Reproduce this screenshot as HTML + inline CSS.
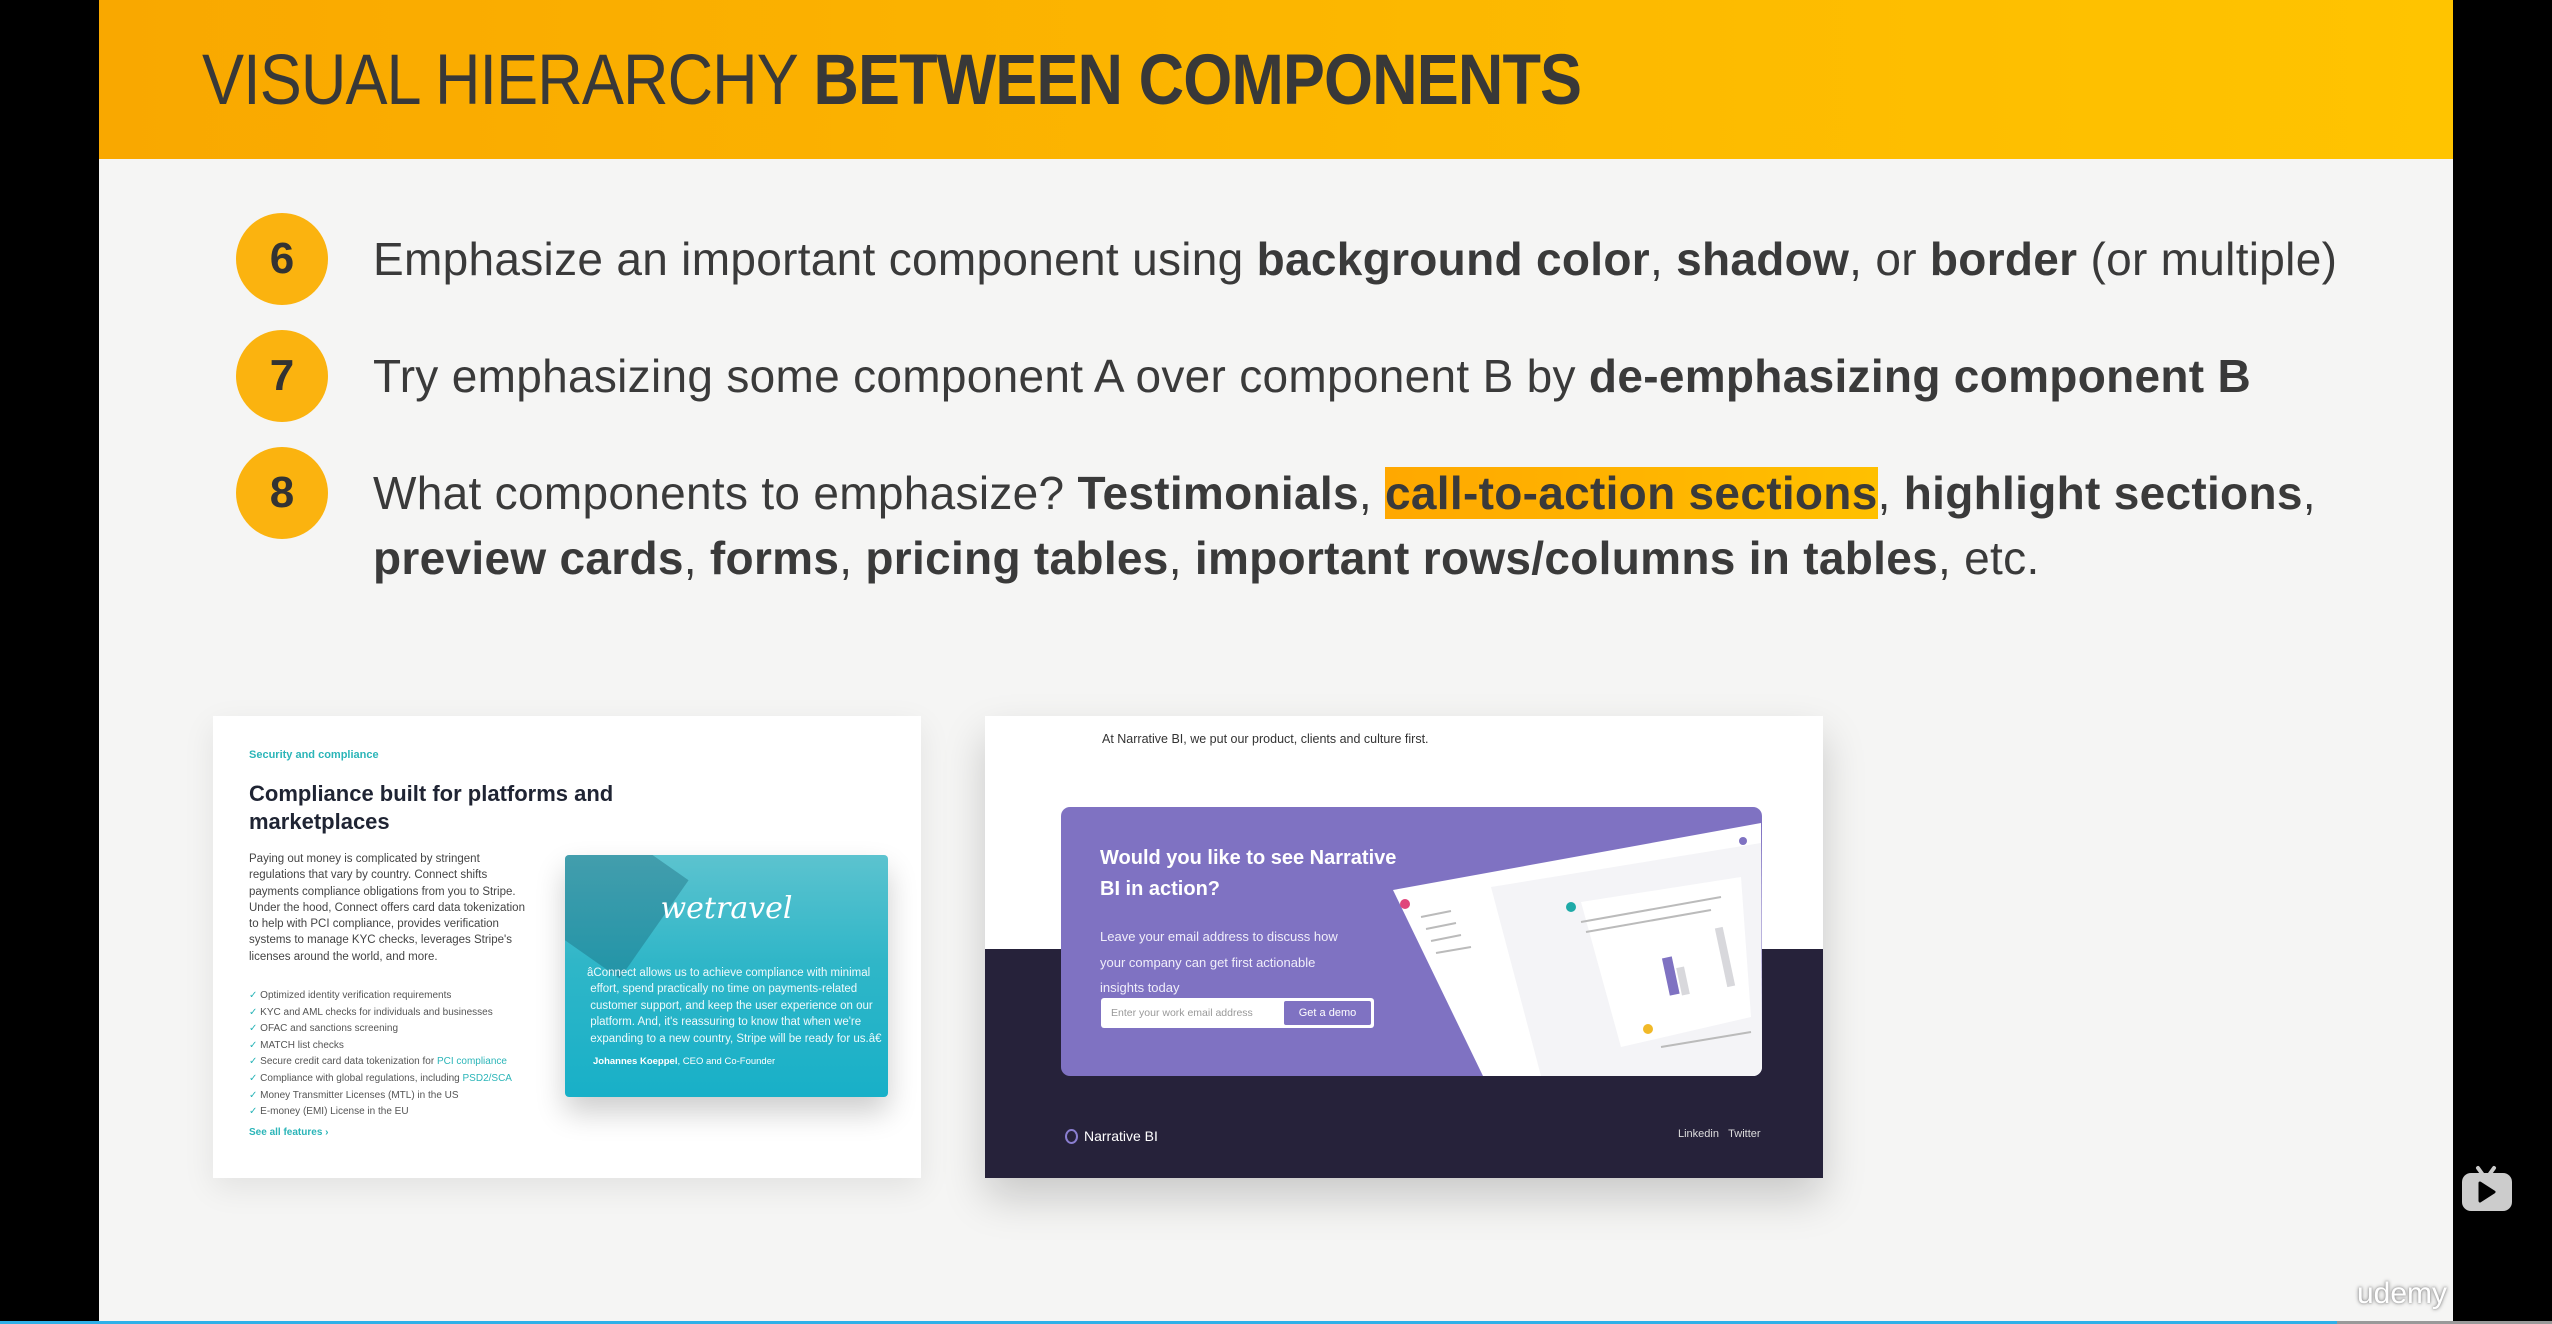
<!DOCTYPE html>
<html><head><meta charset="utf-8"><style>
*{margin:0;padding:0;box-sizing:border-box}
body{width:2552px;height:1324px;background:#000;position:relative;overflow:hidden;font-family:"Liberation Sans",sans-serif;color:#333}
.slide{position:absolute;left:99px;top:0;width:2354px;height:1322px;background:#f5f5f4}
.hdr{position:absolute;left:99px;top:0;width:2354px;height:159px;background:linear-gradient(90deg,#f9a800,#ffc400)}
.title{position:absolute;left:202px;top:40px;font-size:71px;color:#383838;letter-spacing:-1px;white-space:nowrap;transform:scaleX(0.887);transform-origin:0 0}
.circ{position:absolute;left:236px;width:92px;height:92px;border-radius:50%;background:#fbb30f;font-weight:bold;font-size:44px;color:#333;text-align:center;line-height:92px}
.item{position:absolute;left:373px;font-size:46px;letter-spacing:0.3px;color:#3a3a3a;line-height:65px;white-space:nowrap}
.hl{background:linear-gradient(90deg,#ffa800,#ffc000)}
.card1{position:absolute;left:213px;top:716px;width:708px;height:462px;background:#fff;box-shadow:0 10px 30px rgba(0,0,0,.08)}
.card2{position:absolute;left:985px;top:716px;width:838px;height:462px;background:#fff;box-shadow:0 20px 40px rgba(0,0,0,.18);overflow:hidden}
.abs{position:absolute;white-space:nowrap}
</style></head><body>
<div class="slide"></div>
<div class="hdr"></div>
<div class="title">VISUAL HIERARCHY <b>BETWEEN COMPONENTS</b></div>

<div class="circ" style="top:213px">6</div>
<div class="circ" style="top:330px">7</div>
<div class="circ" style="top:447px">8</div>
<div class="item" style="top:227px">Emphasize an important component using <b>background color</b>, <b>shadow</b>, or <b>border</b> (or multiple)</div>
<div class="item" style="top:344px">Try emphasizing some component A over component B by <b>de-emphasizing component B</b></div>
<div class="item" style="top:461px">What components to emphasize? <b>Testimonials</b>, <b class="hl">call-to-action sections</b>, <b>highlight sections</b>,<br><b>preview cards</b>, <b>forms</b>, <b>pricing tables</b>, <b>important rows/columns in tables</b>, etc.</div>

<div class="card1">
 <div class="abs" style="left:36px;top:33px;font-size:11px;color:#2bb5b8;font-weight:bold">Security and compliance</div>
 <div class="abs" style="left:36px;top:64px;font-size:22px;font-weight:bold;color:#1f2433;line-height:28px">Compliance built for platforms and<br>marketplaces</div>
 <div class="abs" style="left:36px;top:135px;font-size:11.5px;color:#444;line-height:16.3px">Paying out money is complicated by stringent<br>regulations that vary by country. Connect shifts<br>payments compliance obligations from you to Stripe.<br>Under the hood, Connect offers card data tokenization<br>to help with PCI compliance, provides verification<br>systems to manage KYC checks, leverages Stripe's<br>licenses around the world, and more.</div>
 <div class="abs" style="left:36px;top:272px;font-size:10px;color:#555;line-height:16.6px">
 <span style="color:#2bb5b8">✓</span> Optimized identity verification requirements<br>
 <span style="color:#2bb5b8">✓</span> KYC and AML checks for individuals and businesses<br>
 <span style="color:#2bb5b8">✓</span> OFAC and sanctions screening<br>
 <span style="color:#2bb5b8">✓</span> MATCH list checks<br>
 <span style="color:#2bb5b8">✓</span> Secure credit card data tokenization for <span style="color:#2bb5b8">PCI compliance</span><br>
 <span style="color:#2bb5b8">✓</span> Compliance with global regulations, including <span style="color:#2bb5b8">PSD2/SCA</span><br>
 <span style="color:#2bb5b8">✓</span> Money Transmitter Licenses (MTL) in the US<br>
 <span style="color:#2bb5b8">✓</span> E-money (EMI) License in the EU</div>
 <div class="abs" style="left:36px;top:411px;font-size:10px;color:#2bb5b8;font-weight:bold">See all features ›</div>
</div>
<div style="position:absolute;left:565px;top:855px;width:323px;height:242px;border-radius:4px;background:linear-gradient(180deg,#5cc3cf 0%,#2fb6c8 45%,#18b0c8 100%);box-shadow:0 15px 30px rgba(0,0,0,.2);overflow:hidden">
 <div style="position:absolute;left:-20px;top:-20px;width:120px;height:120px;background:rgba(20,90,110,.35);transform:rotate(35deg)"></div>
 <div class="abs" style="left:0;width:323px;text-align:center;top:36px;font-family:'DejaVu Serif',serif;font-style:italic;font-size:30px;color:#fff">wetravel</div>
 <div class="abs" style="left:22px;top:110px;font-size:11.5px;color:#eefafc;line-height:16.4px">âConnect allows us to achieve compliance with minimal<br>&nbsp;effort, spend practically no time on payments-related<br>&nbsp;customer support, and keep the user experience on our<br>&nbsp;platform. And, it's reassuring to know that when we're<br>&nbsp;expanding to a new country, Stripe will be ready for us.â€</div>
 <div class="abs" style="left:28px;top:201px;font-size:9.5px;color:#fff"><b>Johannes Koeppel</b>, CEO and Co-Founder</div>
</div>

<div class="card2">
 <div class="abs" style="left:117px;top:16px;font-size:12.5px;color:#333">At Narrative BI, we put our product, clients and culture first.</div>
 <div style="position:absolute;left:0;top:233px;width:838px;height:229px;background:#26223a"></div>
 <div style="position:absolute;left:76px;top:91px;width:701px;height:269px;border-radius:9px;background:#7f72c2;overflow:hidden">
  <svg style="position:absolute;left:0;top:0" width="701" height="269">
   <polygon points="332,83 700,16 701,269 422,269" fill="#fff"/>
   <polygon points="430,80 700,36 701,269 480,269" fill="#f4f4f7"/>
   <polygon points="520,95 680,70 690,210 560,240" fill="#fff"/>
   <rect x="605" y="150" width="10" height="38" fill="#7f72c2" transform="rotate(-12 610 170)"/>
   <rect x="618" y="160" width="8" height="28" fill="#d8d8dc" transform="rotate(-12 622 174)"/>
   <rect x="660" y="120" width="8" height="60" fill="#d8d8dc" transform="rotate(-12 664 150)"/>
   <circle cx="344" cy="97" r="5" fill="#e0457b"/><circle cx="510" cy="100" r="5" fill="#1eaaa8"/><circle cx="587" cy="222" r="5" fill="#f1b928"/><circle cx="682" cy="34" r="4" fill="#7f72c2"/>
   <g stroke="#bbb" stroke-width="2"><line x1="360" y1="110" x2="390" y2="104"/><line x1="365" y1="122" x2="395" y2="116"/><line x1="370" y1="134" x2="400" y2="128"/><line x1="375" y1="146" x2="410" y2="140"/><line x1="520" y1="115" x2="660" y2="90"/><line x1="525" y1="125" x2="650" y2="103"/><line x1="600" y1="240" x2="690" y2="225"/></g>
  </svg>
  <div class="abs" style="left:39px;top:36px;font-size:20px;font-weight:bold;color:#fff;line-height:31px">Would you like to see Narrative<br>BI in action?</div>
  <div class="abs" style="left:39px;top:117px;font-size:13px;color:#f0eefa;line-height:25.5px">Leave your email address to discuss how<br>your company can get first actionable<br>insights today</div>
  <div style="position:absolute;left:40px;top:191px;width:273px;height:30px;background:#fff;border-radius:3px">
   <div class="abs" style="left:10px;top:9px;font-size:10.5px;color:#999">Enter your work email address</div>
   <div style="position:absolute;left:183px;top:3px;width:87px;height:24px;background:#7f72c2;border-radius:2px;color:#fff;font-size:11px;text-align:center;line-height:24px">Get a demo</div>
  </div>
 </div>
 <div class="abs" style="left:80px;top:412px;font-size:14px;color:#fff"><span style="display:inline-block;width:13px;height:15px;border:2px solid #8a7ed0;border-radius:50%;vertical-align:-3px;margin-right:6px"></span>Narrative BI</div>
 <div class="abs" style="left:693px;top:412px;font-size:11px;color:#ddd">Linkedin&nbsp;&nbsp;&nbsp;Twitter</div>
</div>

<svg style="position:absolute;left:2458px;top:1158px" width="56" height="56" viewBox="0 0 56 56">
 <line x1="20" y1="10" x2="25" y2="17" stroke="#ccc" stroke-width="4" stroke-linecap="round"/>
 <line x1="36" y1="10" x2="31" y2="17" stroke="#ccc" stroke-width="4" stroke-linecap="round"/>
 <rect x="4" y="15" width="50" height="38" rx="9" fill="#ccc"/>
 <path d="M22 25 L36 34 L22 43 Z" fill="#000" stroke="#000" stroke-width="3" stroke-linejoin="round"/>
</svg>
<div class="abs" style="left:2357px;top:1277px;font-size:30px;color:#fff;text-shadow:0 0 4px #888,0 0 2px #999">udemy</div>
<div style="position:absolute;left:0;top:1321px;width:2552px;height:3px;background:#999"></div>
<div style="position:absolute;left:0;top:1321px;width:2337px;height:3px;background:#2fb0e8"></div>
</body></html>
